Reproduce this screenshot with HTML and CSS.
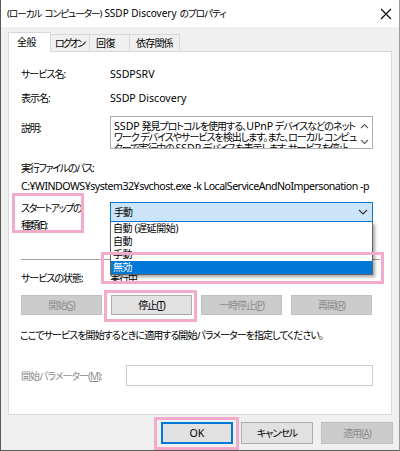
FILE: index.html
```html
<!DOCTYPE html>
<html lang="ja">
<head>
  <meta charset="utf-8">
  <title>SSDP Discovery のプロパティ</title>
  <link rel="stylesheet" href="styles.css">
</head>
<body>
  <div class="window">
    <div class="titlebar">
      <span class="title">(ローカル コンピューター) <span class="en">SSDP Discovery</span> のプロパティ</span>
      <svg class="close" width="12" height="12" viewBox="0 0 12 12">
        <path d="M1 1 L11 11 M11 1 L1 11" stroke="#000" stroke-width="1.1" fill="none"/>
      </svg>
    </div>

    <div class="tabs">
      <div class="tab active">全般</div>
      <div class="tab">ログオン</div>
      <div class="tab">回復</div>
      <div class="tab">依存関係</div>
    </div>

    <div class="panel">
      <div class="row r-name">
        <div class="label">サービス名:</div>
        <div class="value en">SSDPSRV</div>
      </div>
      <div class="row r-display">
        <div class="label">表示名:</div>
        <div class="value en">SSDP Discovery</div>
      </div>
      <div class="row r-desc">
        <div class="label desc-label">説明:</div>
        <div class="textbox">
          <div class="textbox-text"><span class="en">SSDP</span> 発見プロトコルを使用する、<span class="en">UPnP</span> デバイスなどのネット<br>ワーク デバイスやサービスを検出します。また、ローカル コンピュー<br>ターで実行中の <span class="en">SSDP</span> デバイスを表示します。サービスを停止</div>
          <div class="scroll">
            <svg width="9" height="6" viewBox="0 0 9 6"><path d="M1 5 L4.5 1.5 L8 5" stroke="#606060" stroke-width="1.2" fill="none"/></svg>
            <svg width="9" height="6" viewBox="0 0 9 6"><path d="M1 1 L4.5 4.5 L8 1" stroke="#606060" stroke-width="1.2" fill="none"/></svg>
          </div>
        </div>
      </div>
      <div class="plain r-pathlabel">実行ファイルのパス:</div>
      <div class="plain r-path en">C:¥WINDOWS¥system32¥svchost.exe -k LocalServiceAndNoImpersonation -p</div>

      <div class="row r-startup">
        <div class="label startup-label">
          スタートアップの<br>種類(<u>E</u>):
          <span class="mark mark-label"></span>
        </div>
        <div class="combo">
          <div class="select">
            <span>手動</span>
            <svg width="10" height="6" viewBox="0 0 10 6"><path d="M1 1 L5 5 L9 1" stroke="#333" stroke-width="1.1" fill="none"/></svg>
          </div>
          <ul class="droplist">
            <li>自動 (遅延開始)</li>
            <li>自動</li>
            <li>手動</li>
            <li class="selected">無効</li>
          </ul>
          <span class="mark mark-list"></span>
        </div>
      </div>

      <div class="separator"></div>

      <div class="row r-status">
        <div class="label">サービスの状態:</div>
        <div class="value">実行中</div>
      </div>

      <div class="buttons">
        <div class="btn disabled">開始(<u>S</u>)</div>
        <div class="btn stop">停止(<u>T</u>)<span class="mark mark-stop"></span></div>
        <div class="btn disabled">一時停止(<u>P</u>)</div>
        <div class="btn disabled">再開(<u>R</u>)</div>
      </div>

      <div class="plain r-hint">ここでサービスを開始するときに適用する開始パラメーターを指定してください。</div>

      <div class="row r-param">
        <div class="label param-label">開始パラメーター(<u>M</u>):</div>
        <div class="input"></div>
      </div>
    </div>

    <div class="footer">
      <div class="btn wide default"><span class="en">OK</span><span class="mark mark-ok"></span></div>
      <div class="btn wide">キャンセル</div>
      <div class="btn wide disabled">適用(<u>A</u>)</div>
    </div>
  </div>
</body>
</html>
```

FILE: styles.css
```css
:root {
  --ui-font: "Noto Sans", "Noto Sans CJK JP", sans-serif;
  --window-bg: #f0f0f0;
  --panel-border: #d9d9d9;
  --text: #000000;
  --text-disabled: #8d8d8d;
  --accent: #0078d7;
  --mark: #f3aacb;
}

* {
  box-sizing: border-box;
  margin: 0;
  padding: 0;
}

body {
  width: 400px;
  height: 451px;
  overflow: hidden;
  font-family: var(--ui-font);
  font-size: 10px;
  letter-spacing: -1px;
  font-feature-settings: "palt";
  color: var(--text);
  background: #ffffff;
}

/* latin runs keep normal spacing, japanese is condensed */
.en {
  font-size: 10.6px;
  letter-spacing: 0;
}

u {
  text-decoration: underline;
  text-underline-offset: 1px;
}

.window {
  width: 400px;
  height: 451px;
  background: var(--window-bg);
  border-left: 1px solid #5a5a5a;
  border-right: 1px solid #9a9a9a;
  border-bottom: 1px solid #5a5a5a;
  display: flex;
  flex-direction: column;
}

.titlebar {
  height: 27px;
  background: #ffffff;
  display: flex;
  align-items: center;
  justify-content: space-between;
  padding: 0 7px 0 6px;
}

.title {
  font-size: 9.6px;
  letter-spacing: -1px;
  line-height: 16px;
  word-spacing: 1.5px;
}

.title .en {
  font-size: 10px;
  letter-spacing: 0;
  word-spacing: 0;
}

/* tabs */
.tabs {
  display: flex;
  align-items: flex-end;
  height: 24px;
  padding-left: 7px;
}

.tab {
  height: 17px;
  line-height: 16px;
  border: 1px solid var(--panel-border);
  border-bottom: none;
  border-left: none;
  background: var(--window-bg);
  white-space: nowrap;
  overflow: hidden;
}

.tab.active {
  height: 20px;
  line-height: 19px;
  width: 43px;
  padding: 0 0 0 8px;
  background: #ffffff;
  border-left: 1px solid var(--panel-border);
  margin-bottom: -1px;
  position: relative;
  z-index: 1;
  letter-spacing: -0.5px;
}

.tab:nth-child(2) { width: 39px; padding: 0 0 0 4px; letter-spacing: -2px; }
.tab:nth-child(3) { width: 40px; padding: 0 0 0 6px; letter-spacing: -0.5px; }
.tab:nth-child(4) { width: 50px; padding: 0 0 0 6px; letter-spacing: -0.8px; }

/* main panel */
.panel {
  margin: 0 7px 0 7px;
  height: 364px;
  background: #ffffff;
  border: 1px solid var(--panel-border);
  padding: 14px 18px 0 12px;
  display: flex;
  flex-direction: column;
}

.row {
  display: flex;
  align-items: flex-start;
}

.label {
  width: 89px;
  flex: none;
  line-height: 16px;
}

.value {
  line-height: 16px;
}

.plain {
  line-height: 16px;
  white-space: nowrap;
}

.r-display { margin-top: 8px; }

.r-desc { margin-top: 10px; }

.desc-label { padding-top: 4px; }

.textbox {
  flex: 1;
  height: 33px;
  border: 1px solid #adadad;
  display: flex;
  overflow: hidden;
}

.textbox-text {
  flex: 1;
  padding: 4px 0 0 3px;
  line-height: 11px;
  white-space: nowrap;
  overflow: hidden;
}

.scroll {
  width: 15px;
  display: flex;
  flex-direction: column;
  justify-content: space-between;
  align-items: center;
  padding: 6px 0 3px;
}

.r-pathlabel { margin-top: 11px; letter-spacing: -1.3px; }
.r-path { margin-top: 2px; letter-spacing: -0.5px; }

/* startup type */
.r-startup { margin-top: 6px; }

.startup-label {
  line-height: 17px;
  position: relative;
  letter-spacing: -1.4px;
  white-space: nowrap;
}

.combo {
  flex: 1;
  margin-top: 2px;
  position: relative;
}

.select {
  height: 20px;
  background: #cce4f7;
  border: 1px solid var(--accent);
  display: flex;
  align-items: center;
  justify-content: space-between;
  padding: 0 4px 0 3px;
  line-height: 16px;
}

.droplist {
  list-style: none;
  position: absolute;
  left: 0;
  right: 0;
  top: 20px;
  background: #ffffff;
  border: 1px solid #646464;
  border-top: none;
  box-shadow: 2px 2px 3px rgba(0, 0, 0, 0.35);
  z-index: 2;
  letter-spacing: -0.4px;
}

.droplist li {
  height: 13px;
  line-height: 13px;
  padding-left: 2px;
}

.droplist li.selected {
  background: var(--accent);
  color: #ffffff;
}

.separator {
  margin-top: 25px;
  height: 1px;
  background: #a0a0a0;
  margin-right: -7px;
}

.r-status { margin-top: 10px; }

/* service buttons */
.buttons {
  display: flex;
  gap: 9px;
  margin-top: 9px;
}

.btn {
  height: 20px;
  width: 81px;
  border: 1px solid #adadad;
  background: #e1e1e1;
  display: flex;
  align-items: center;
  justify-content: center;
  line-height: 16px;
  position: relative;
}

.btn.disabled {
  background: #cccccc;
  border-color: #bfbfbf;
  color: var(--text-disabled);
}

.r-hint { margin-top: 12px; margin-left: -1px; letter-spacing: -0.95px; }

.r-param {
  margin-top: 22px;
  align-items: center;
}

.param-label {
  width: 105px;
  color: var(--text-disabled);
}

.input {
  flex: 1;
  height: 21px;
  border: 1px solid #cccccc;
}

/* footer buttons */
.footer {
  display: flex;
  justify-content: flex-end;
  gap: 8px;
  padding: 7px 6px 0 0;
}

.btn.wide {
  width: 72px;
  height: 22px;
}

.btn.default {
  border: 2px solid var(--accent);
}

/* pink highlight marks */
.mark {
  position: absolute;
  border: 3px solid var(--mark);
  pointer-events: none;
  z-index: 3;
}

.mark-label { left: -9px; top: -7px; width: 72px; height: 40px; }
.mark-list { left: -9px; top: 50px; width: 283px; height: 32px; }
.mark-stop { left: -8px; top: -6px; width: 93px; height: 32px; }
.mark-ok { left: -9px; top: -7px; width: 85px; height: 33px; }
```
